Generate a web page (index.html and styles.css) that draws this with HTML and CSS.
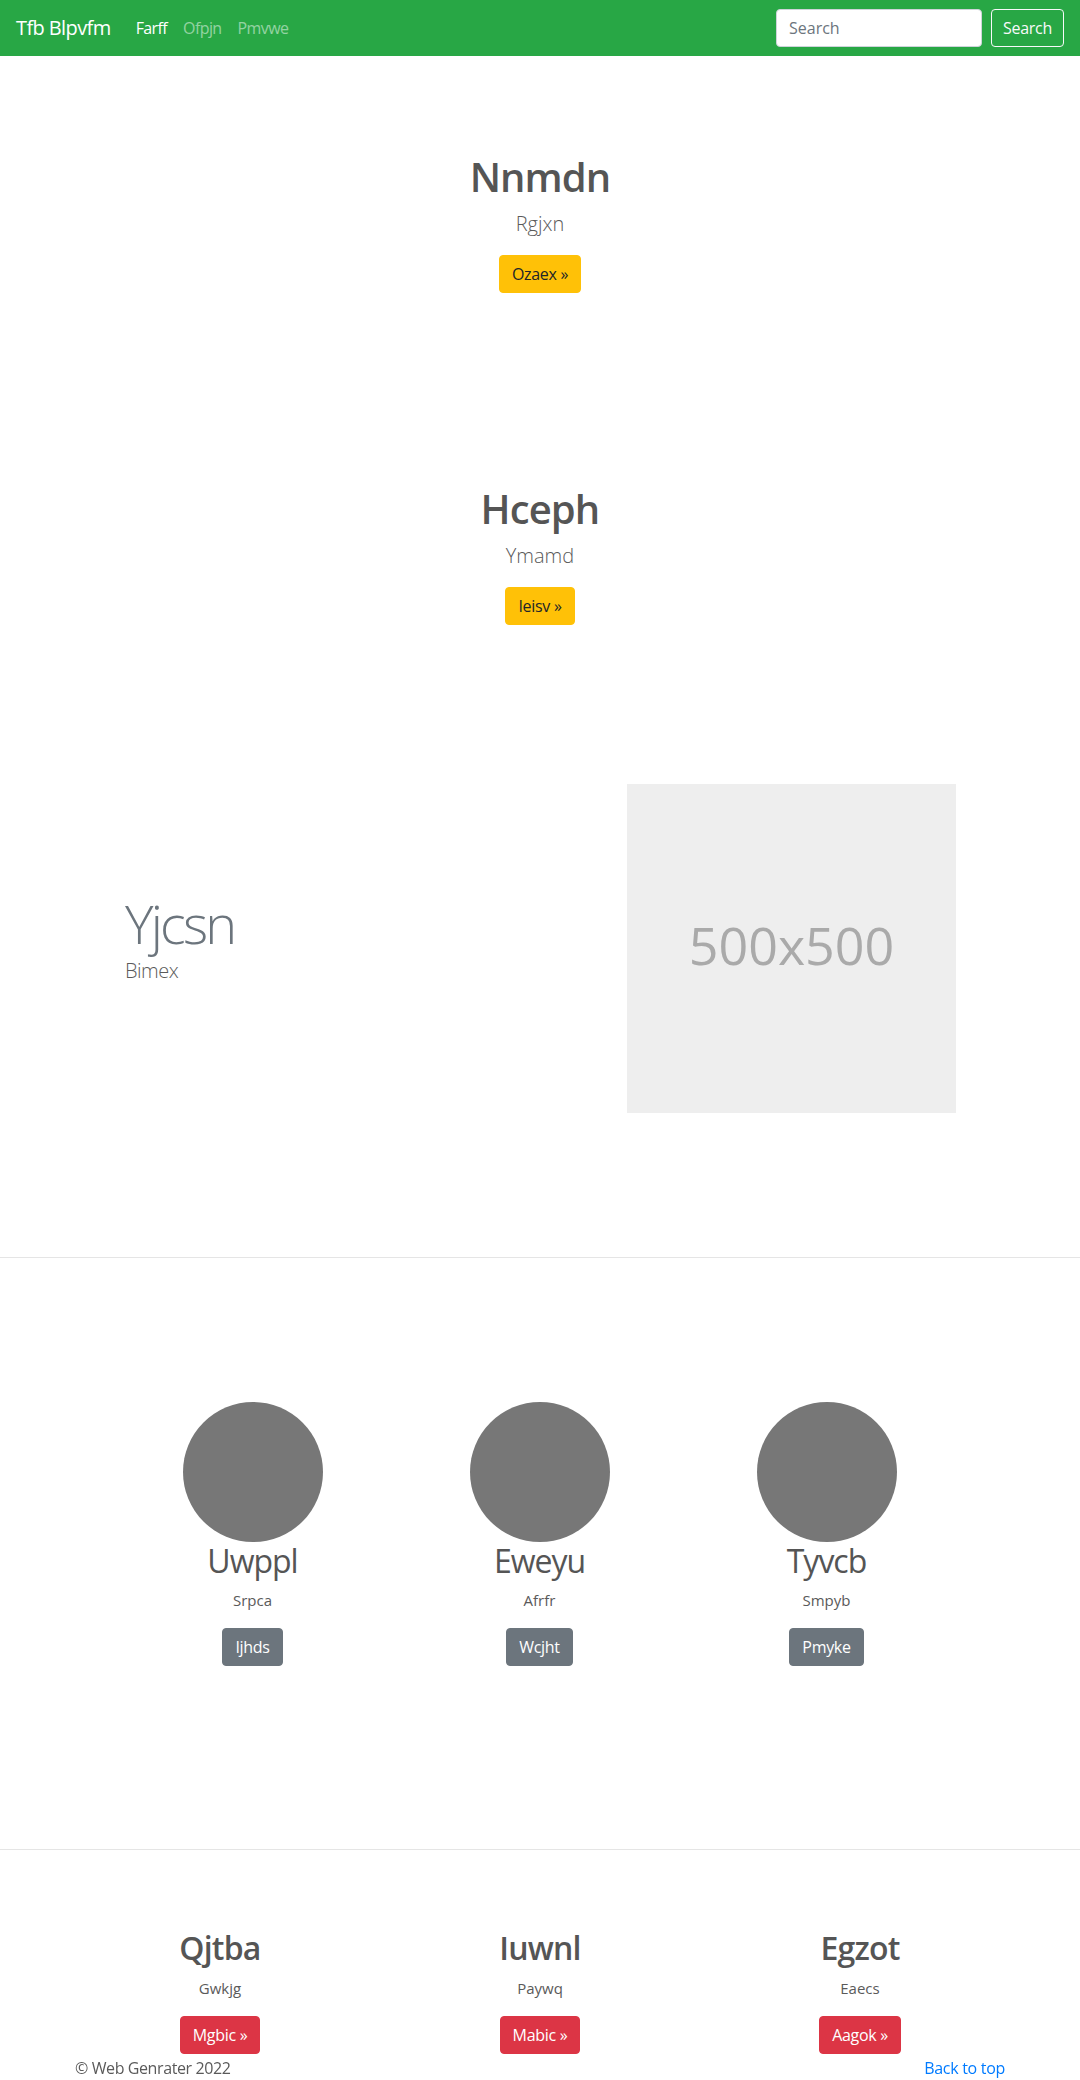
FILE: index.html
```html
<!DOCTYPE html>
<html lang="en">
<head>
<meta charset="utf-8">
<title>Tfb Blpvfm</title>
<link rel="stylesheet" href="styles.css">
</head>
<body>
<nav class="navbar">
  <a class="brand" href="#">Tfb Blpvfm</a>
  <ul class="nav">
    <li><a class="nav-link active" href="#">Farff</a></li>
    <li><a class="nav-link" href="#">Ofpjn</a></li>
    <li><a class="nav-link" href="#">Pmvwe</a></li>
  </ul>
  <form class="search">
    <input class="search-input" type="text" placeholder="Search">
    <button class="btn btn-outline-light" type="button">Search</button>
  </form>
</nav>

<main>
  <section class="hero">
    <h1 class="hero-title">Nnmdn</h1>
    <p class="lead">Rgjxn</p>
    <a class="btn btn-warning" href="#">Ozaex &raquo;</a>
  </section>

  <section class="hero">
    <h1 class="hero-title">Hceph</h1>
    <p class="lead">Ymamd</p>
    <a class="btn btn-warning" href="#">Ieisv &raquo;</a>
  </section>

  <section class="featurette">
    <div class="feat-text">
      <h2 class="feat-heading">Yjcsn</h2>
      <p class="lead feat-lead">Bimex</p>
    </div>
    <div class="placeholder">500x500</div>
  </section>

  <hr class="divider">

  <section class="marketing">
    <div class="mk-col">
      <div class="circle"></div>
      <h2 class="mk-title">Uwppl</h2>
      <p class="mk-text">Srpca</p>
      <a class="btn btn-secondary" href="#">Ijhds</a>
    </div>
    <div class="mk-col">
      <div class="circle"></div>
      <h2 class="mk-title">Eweyu</h2>
      <p class="mk-text">Afrfr</p>
      <a class="btn btn-secondary" href="#">Wcjht</a>
    </div>
    <div class="mk-col">
      <div class="circle"></div>
      <h2 class="mk-title">Tyvcb</h2>
      <p class="mk-text">Smpyb</p>
      <a class="btn btn-secondary" href="#">Pmyke</a>
    </div>
  </section>

  <hr class="divider">

  <section class="columns">
    <div class="col">
      <h2 class="col-title">Qjtba</h2>
      <p class="mk-text">Gwkjg</p>
      <a class="btn btn-danger" href="#">Mgbic &raquo;</a>
    </div>
    <div class="col">
      <h2 class="col-title">Iuwnl</h2>
      <p class="mk-text">Paywq</p>
      <a class="btn btn-danger" href="#">Mabic &raquo;</a>
    </div>
    <div class="col">
      <h2 class="col-title">Egzot</h2>
      <p class="mk-text">Eaecs</p>
      <a class="btn btn-danger" href="#">Aagok &raquo;</a>
    </div>
  </section>
</main>

<footer class="footer">
  <p class="copy">&copy; Web Genrater 2022</p>
  <a class="top-link" href="#">Back to top</a>
</footer>
</body>
</html>
```

FILE: styles.css
```css
* { box-sizing: border-box; }

html, body {
  margin: 0;
  padding: 0;
}

body {
  font-family: "Open Sans", "Noto Sans", "DejaVu Sans", sans-serif;
  font-size: 16px;
  line-height: 1.5;
  color: #5a5a5a;
  background: #fff;
  width: 1080px;
  min-height: 2080px;
}

a { text-decoration: none; }

/* navbar */
.navbar {
  display: flex;
  align-items: center;
  height: 56px;
  padding: 8px 16px;
  background: #28a745;
}

.brand {
  font-size: 20px;
  line-height: 30px;
  color: #fff;
  margin-right: 17px;
  letter-spacing: -0.6px;
}

.nav {
  display: flex;
  list-style: none;
  margin: 0;
  padding: 0;
}

.nav-link {
  display: block;
  padding: 8px 8px;
  color: rgba(255, 255, 255, 0.5);
  font-size: 16px;
  letter-spacing: -0.6px;
}

.nav-link.active { color: #fff; }

.search {
  display: flex;
  align-items: center;
  margin: 0 0 0 auto;
}

.search-input {
  width: 206px;
  height: 38px;
  padding: 6px 12px;
  margin-right: 9px;
  font-family: inherit;
  font-size: 16px;
  color: #495057;
  background: #fff;
  border: 1px solid #ced4da;
  border-radius: 4px;
}

.search-input::placeholder { color: #6c757d; }

/* buttons */
.btn {
  display: inline-block;
  padding: 6px 12px;
  font-family: inherit;
  font-size: 16px;
  line-height: 24px;
  border: 1px solid transparent;
  border-radius: 4px;
  letter-spacing: -0.3px;
}

.btn-outline-light {
  color: #f8f9fa;
  background: transparent;
  border-color: #f8f9fa;
  width: 73px;
  padding: 6px 0;
  text-align: center;
}

.btn-warning { color: #212529; background: #ffc107; border-color: #ffc107; }
.btn-secondary { color: #fff; background: #6c757d; border-color: #6c757d; }
.btn-danger { color: #fff; background: #dc3545; border-color: #dc3545; }

/* hero */
.hero {
  height: 332px;
  padding-top: 97px;
  text-align: center;
}

.hero-title {
  margin: 0 0 8px;
  font-size: 40px;
  line-height: 1.2;
  font-weight: 600;
  color: #555;
  letter-spacing: -0.9px;
}

.lead {
  margin: 0 0 16px;
  font-size: 20px;
  line-height: 30px;
  font-weight: 300;
  color: #5a5a5a;
}

/* featurette */
.featurette {
  display: flex;
  align-items: center;
  padding: 64px 124px 144px 125px;
}

.feat-text { flex: 1; padding-top: 6px; }

.feat-heading {
  margin: 0;
  font-size: 54px;
  line-height: 1.2;
  font-weight: 300;
  color: #6c757d;
  letter-spacing: -2.8px;
}

.feat-lead { margin-bottom: 26px; letter-spacing: -0.5px; }

.placeholder {
  width: 329px;
  height: 329px;
  display: flex;
  align-items: center;
  justify-content: center;
  padding-bottom: 8px;
  background: #eee;
  color: #aaa;
  font-size: 52px;
  line-height: 1;
}

.divider {
  margin: 0;
  border: 0;
  border-top: 1px solid rgba(0, 0, 0, 0.1);
}

/* marketing */
.marketing {
  display: grid;
  grid-template-columns: repeat(3, 287px);
  padding: 144px 0 183px 109px;
}

.mk-col { text-align: center; }

.circle {
  width: 140px;
  height: 140px;
  margin: 0 auto;
  border-radius: 50%;
  background: #777;
}

.mk-title {
  margin: 0 0 8px;
  font-size: 32px;
  line-height: 1.2;
  font-weight: 400;
  color: #555;
  letter-spacing: -1px;
}

.mk-text {
  margin: 0 0 16px;
  font-size: 15px;
  line-height: 24px;
  color: #5a5a5a;
}

/* columns */
.columns {
  display: grid;
  grid-template-columns: repeat(3, 320px);
  padding: 79px 0 0 60px;
}

.col { text-align: center; }

.col-title {
  margin: 0 0 8px;
  font-size: 32px;
  line-height: 1.2;
  font-weight: 600;
  color: #555;
  letter-spacing: -0.8px;
}

/* footer */
.footer {
  position: fixed;
  left: 0;
  right: 0;
  bottom: 0;
  display: flex;
  justify-content: space-between;
  width: 960px;
  margin: 0 auto;
  padding: 0 15px;
  line-height: 24px;
}

.copy { margin: 0; color: #5a5a5a; letter-spacing: -0.4px; }

.top-link { color: #007bff; letter-spacing: -0.3px; }
```
